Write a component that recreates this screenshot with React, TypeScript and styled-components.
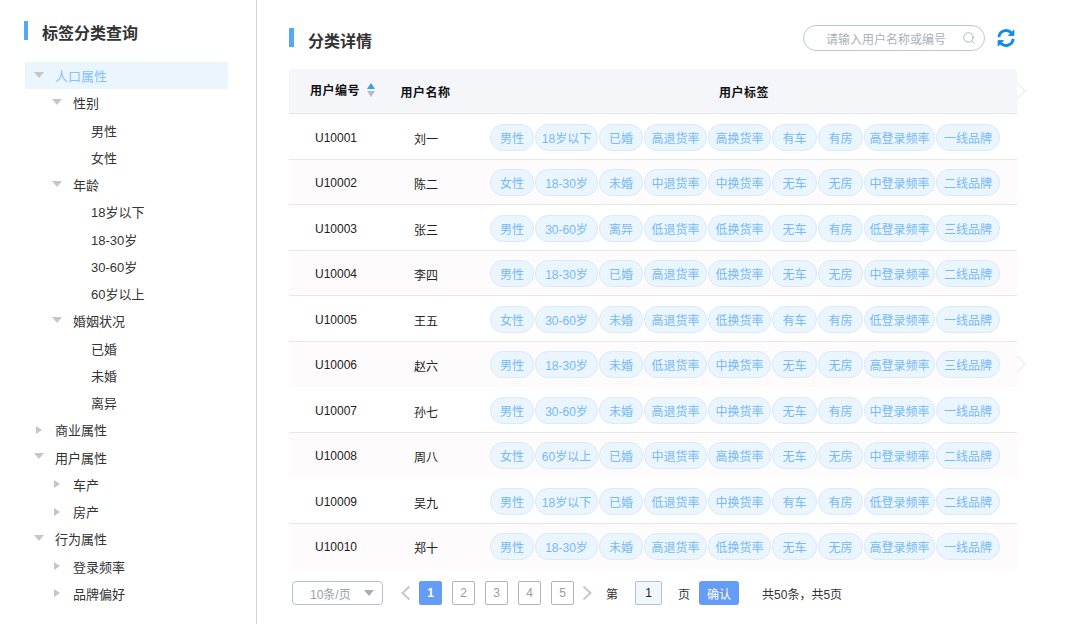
import React from 'react';
import styled, { createGlobalStyle } from 'styled-components';
import { Search } from 'lucide-react';

const Global = createGlobalStyle`
  html, body { margin: 0; padding: 0; background: #fff; }
  body { font-family: "Liberation Sans", "Noto Sans CJK SC", sans-serif; }
  * { box-sizing: border-box; }
`;

const Page = styled.div`
  display: flex;
  width: 1080px;
  height: 624px;
  overflow: hidden;
  background: #fff;
`;

const Sidebar = styled.aside`
  width: 257px;
  flex: none;
  border-right: 1px solid #d4d4d4;
  padding: 21px 28px 0 24px;
`;

const Heading = styled.h2<{ $bar: number; $gap: number; $raise?: number }>`
  margin: ${(p) => -(p.$raise ?? 0)}px 0 0;
  height: 19px;
  display: flex;
  align-items: center;
  gap: ${(p) => p.$gap}px;
  font-size: 16px;
  font-weight: 700;
  color: #333;
  &::before {
    content: '';
    width: ${(p) => p.$bar}px;
    height: 19px;
    background: #55a8f6;
    flex: none;
  }
`;

const HeadingText = styled.span<{ $drop: number }>`
  position: relative;
  top: ${(p) => p.$drop}px;
`;

const Tree = styled.ul`
  list-style: none;
  margin: 22px 0 0 1px;
  padding: 0;
`;

const Node = styled.li<{ $level: number; $active?: boolean }>`
  height: 27.26px;
  display: flex;
  align-items: center;
  padding-left: ${(p) => 8 + p.$level * 18}px;
  font-size: 13px;
  color: ${(p) => (p.$active ? '#86c1fb' : '#333')};
  background: ${(p) => (p.$active ? '#ebf5fe' : 'transparent')};
`;

const Caret = styled.span<{ $open?: boolean; $none?: boolean }>`
  width: 22px;
  flex: none;
  display: flex;
  align-items: center;
  height: 10px;
  margin-top: ${(p) => (p.$open ? -2 : 0)}px;
  &::before {
    content: '';
    display: ${(p) => (p.$none ? 'none' : 'block')};
    width: 0;
    height: 0;
    margin-left: 1px;
    ${(p) =>
      p.$open
        ? `border-left: 5px solid transparent; border-right: 5px solid transparent; border-top: 6px solid #c6c6c6;`
        : `margin-left: 3px; border-top: 4.5px solid transparent; border-bottom: 4.5px solid transparent; border-left: 6px solid #c6c6c6;`}
  }
`;

const Main = styled.main`
  flex: 1;
  min-width: 0;
  padding: 25px 63px 0 32px;
`;

const TopBar = styled.div`
  height: 26px;
  display: flex;
  align-items: center;
  justify-content: space-between;
`;

const SearchArea = styled.div`
  display: flex;
  align-items: center;
  gap: 11px;
  margin-right: 1px;
`;

const SearchBox = styled.div`
  width: 182px;
  height: 26px;
  border: 1px solid #bcc7d4;
  border-radius: 13px;
  display: flex;
  align-items: center;
  justify-content: space-between;
  padding: 0 8px 0 22px;
  font-size: 12px;
  color: #aab0b8;
  svg { color: #a8b0ba; }
`;

const Table = styled.div`
  margin-top: 18px;
`;

const Grid = styled.div`
  display: grid;
  grid-template-columns: 91px 91px 1fr;
  align-items: center;
  position: relative;
`;

const EdgeMark = styled.span`
  position: absolute;
  right: -7px;
  top: 50%;
  width: 12px;
  height: 12px;
  margin-top: -6px;
  border-top: 2px solid #f0f3f8;
  border-right: 2px solid #f0f3f8;
  transform: rotate(45deg);
`;

const HeadRow = styled(Grid)`
  height: 45px;
  background: #f4f6fa;
  border-bottom: 1px solid #e4e6e9;
  font-size: 12px;
  font-weight: 700;
  letter-spacing: 0.5px;
  color: #111;
`;

const HeadCell = styled.div<{ $lift?: boolean }>`
  display: flex;
  align-items: center;
  justify-content: center;
  gap: 7px;
  margin-top: ${(p) => (p.$lift ? -3 : 1)}px;
`;

const HeadId = styled(HeadCell)`
  justify-content: flex-start;
  padding-left: 21px;
`;

const Sort = styled.span`
  display: flex;
  flex-direction: column;
  gap: 2px;
  &::before {
    content: '';
    border-left: 4px solid transparent;
    border-right: 4px solid transparent;
    border-bottom: 6px solid #3aa0e6;
  }
  &::after {
    content: '';
    border-left: 4px solid transparent;
    border-right: 4px solid transparent;
    border-top: 6px solid #b4bcc6;
  }
`;

const Row = styled(Grid)<{ $even: boolean; $plain: boolean }>`
  height: 45.5px;
  background: ${(p) => (p.$even ? '#fdfbfb' : '#fff')};
  border-bottom: 1px solid ${(p) => (p.$plain ? 'transparent' : '#e8e8e8')};
  font-size: 12px;
  color: #222;
`;

const IdCell = styled.div`
  padding-left: 26px;
  margin-top: 3px;
`;

const NameCell = styled.div`
  text-align: center;
  margin-left: 1px;
  margin-top: 4px;
`;

const Tags = styled.div`
  display: flex;
  padding-left: 19px;
  gap: 1px;
  margin-top: 2px;
`;

const Tag = styled.span<{ $w: number }>`
  width: ${(p) => p.$w}px;
  height: 27px;
  flex: none;
  display: flex;
  align-items: center;
  justify-content: center;
  background: #ebf5fe;
  border: 1px solid #d9eafa;
  border-radius: 13px;
  font-size: 12px;
  color: #74b9f8;
  white-space: nowrap;
`;

const Pager = styled.div`
  display: flex;
  align-items: center;
  height: 24px;
  margin-top: 12px;
  padding-left: 3px;
  font-size: 12px;
  color: #333;
`;

const SizeSelect = styled.div`
  width: 91px;
  height: 24px;
  border: 1px solid #b5c1cf;
  border-radius: 4px;
  display: flex;
  align-items: center;
  justify-content: space-between;
  padding: 0 8px 0 17px;
  color: #9aa0a8;
  &::after {
    content: '';
    border-left: 5px solid transparent;
    border-right: 5px solid transparent;
    border-top: 6px solid #a4afbc;
  }
`;

const Arrow = styled.svg<{ $left: number; $right: number }>`
  flex: none;
  width: 11px;
  height: 16px;
  margin: 0 ${(p) => p.$right}px 0 ${(p) => p.$left}px;
`;

const Pages = styled.div`
  display: flex;
  gap: 10px;
`;

const PageBtn = styled.span<{ $active?: boolean }>`
  width: 23px;
  height: 24px;
  display: flex;
  align-items: center;
  justify-content: center;
  border-radius: 2px;
  border: 1px solid ${(p) => (p.$active ? '#659cf8' : '#b4b4b4')};
  background: ${(p) => (p.$active ? '#659cf8' : '#fff')};
  color: ${(p) => (p.$active ? '#fff' : '#9c9c9c')};
  font-weight: ${(p) => (p.$active ? 700 : 400)};
`;

const Label = styled.span<{ $ml: number }>`
  margin-left: ${(p) => p.$ml}px;
`;

const PageInput = styled.span`
  width: 27px;
  height: 24px;
  margin-left: 17px;
  display: flex;
  align-items: center;
  justify-content: center;
  border: 1px solid #b5c1cf;
  border-radius: 2px;
  background: #f1f7fd;
  color: #222;
`;

const Confirm = styled.span`
  width: 40px;
  height: 24px;
  margin-left: 9px;
  display: flex;
  align-items: center;
  justify-content: center;
  border-radius: 3px;
  background: #659cf8;
  color: #fff;
`;

const tree: [string, number, 'open' | 'closed' | 'none', boolean?][] = [
  ['人口属性', 0, 'open', true],
  ['性别', 1, 'open'],
  ['男性', 2, 'none'],
  ['女性', 2, 'none'],
  ['年龄', 1, 'open'],
  ['18岁以下', 2, 'none'],
  ['18-30岁', 2, 'none'],
  ['30-60岁', 2, 'none'],
  ['60岁以上', 2, 'none'],
  ['婚姻状况', 1, 'open'],
  ['已婚', 2, 'none'],
  ['未婚', 2, 'none'],
  ['离异', 2, 'none'],
  ['商业属性', 0, 'closed'],
  ['用户属性', 0, 'open'],
  ['车产', 1, 'closed'],
  ['房产', 1, 'closed'],
  ['行为属性', 0, 'open'],
  ['登录频率', 1, 'closed'],
  ['品牌偏好', 1, 'closed'],
];

const widths = [44, 63, 44, 63, 63, 45, 45, 71, 64];

const rows: [string, string, string[]][] = [
  ['U10001', '刘一', ['男性', '18岁以下', '已婚', '高退货率', '高换货率', '有车', '有房', '高登录频率', '一线品牌']],
  ['U10002', '陈二', ['女性', '18-30岁', '未婚', '中退货率', '中换货率', '无车', '无房', '中登录频率', '二线品牌']],
  ['U10003', '张三', ['男性', '30-60岁', '离异', '低退货率', '低换货率', '无车', '有房', '低登录频率', '三线品牌']],
  ['U10004', '李四', ['男性', '18-30岁', '已婚', '高退货率', '低换货率', '无车', '无房', '中登录频率', '二线品牌']],
  ['U10005', '王五', ['女性', '30-60岁', '未婚', '高退货率', '低换货率', '有车', '有房', '低登录频率', '一线品牌']],
  ['U10006', '赵六', ['男性', '18-30岁', '未婚', '低退货率', '中换货率', '无车', '无房', '高登录频率', '三线品牌']],
  ['U10007', '孙七', ['男性', '30-60岁', '未婚', '高退货率', '中换货率', '无车', '有房', '中登录频率', '一线品牌']],
  ['U10008', '周八', ['女性', '60岁以上', '已婚', '中退货率', '高换货率', '无车', '无房', '中登录频率', '二线品牌']],
  ['U10009', '吴九', ['男性', '18岁以下', '已婚', '低退货率', '中换货率', '有车', '有房', '低登录频率', '二线品牌']],
  ['U10010', '郑十', ['男性', '18-30岁', '未婚', '高退货率', '低换货率', '无车', '无房', '高登录频率', '一线品牌']],
];

const Refresh = () => (
  <svg width="20" height="20" viewBox="0 0 24 24" fill="none" stroke="#0d8cf0" strokeWidth="3.4">
    <path d="M3.5 11a8.6 8.6 0 0 1 15-5" />
    <path d="M20.5 13a8.6 8.6 0 0 1-15 5" />
    <path d="M21.5 2.5v6.5h-6.5z" fill="#0d8cf0" strokeWidth="1" />
    <path d="M2.5 21.5v-6.5h6.5z" fill="#0d8cf0" strokeWidth="1" />
  </svg>
);

export default function App() {
  return (
    <Page>
      <Global />
      <Sidebar>
        <Heading $bar={4} $gap={14}>
          <HeadingText $drop={1}>标签分类查询</HeadingText>
        </Heading>
        <Tree>
          {tree.map(([label, level, state, active]) => (
            <Node key={label + level} $level={level} $active={active}>
              <Caret $open={state === 'open'} $none={state === 'none'} />
              {label}
            </Node>
          ))}
        </Tree>
      </Sidebar>
      <Main>
        <TopBar>
          <Heading $bar={5} $gap={14} $raise={1}>
            <HeadingText $drop={2}>分类详情</HeadingText>
          </Heading>
          <SearchArea>
            <SearchBox>
              请输入用户名称或编号
              <Search size={14} strokeWidth={1.6} />
            </SearchBox>
            <Refresh />
          </SearchArea>
        </TopBar>
        <Table>
          <HeadRow>
            <HeadId $lift>
              用户编号
              <Sort />
            </HeadId>
            <HeadCell>用户名称</HeadCell>
            <HeadCell>用户标签</HeadCell>
            <EdgeMark />
          </HeadRow>
          {rows.map(([id, name, tags], i) => (
            <Row key={id} $even={i % 2 === 1} $plain={i === 5 || i === 7 || i === 9}>
              <IdCell>{id}</IdCell>
              <NameCell>{name}</NameCell>
              <Tags>
                {tags.map((t, j) => (
                  <Tag key={j} $w={widths[j]}>
                    {t}
                  </Tag>
                ))}
              </Tags>
              {i === 5 && <EdgeMark />}
            </Row>
          ))}
        </Table>
        <Pager>
          <SizeSelect>10条/页</SizeSelect>
          <Arrow $left={17} $right={8} viewBox="0 0 11 16" fill="none" stroke="#c8c8c8" strokeWidth="2">
            <path d="M9.5 1.5 2.5 8l7 6.5" />
          </Arrow>
          <Pages>
            {[1, 2, 3, 4, 5].map((n) => (
              <PageBtn key={n} $active={n === 1}>
                {n}
              </PageBtn>
            ))}
          </Pages>
          <Arrow $left={8} $right={13} viewBox="0 0 11 16" fill="none" stroke="#c8c8c8" strokeWidth="2">
            <path d="M1.5 1.5 8.5 8l-7 6.5" />
          </Arrow>
          <Label $ml={0}>第</Label>
          <PageInput>1</PageInput>
          <Label $ml={16}>页</Label>
          <Confirm>确认</Confirm>
          <Label $ml={23}>共50条，共5页</Label>
        </Pager>
      </Main>
    </Page>
  );
}
